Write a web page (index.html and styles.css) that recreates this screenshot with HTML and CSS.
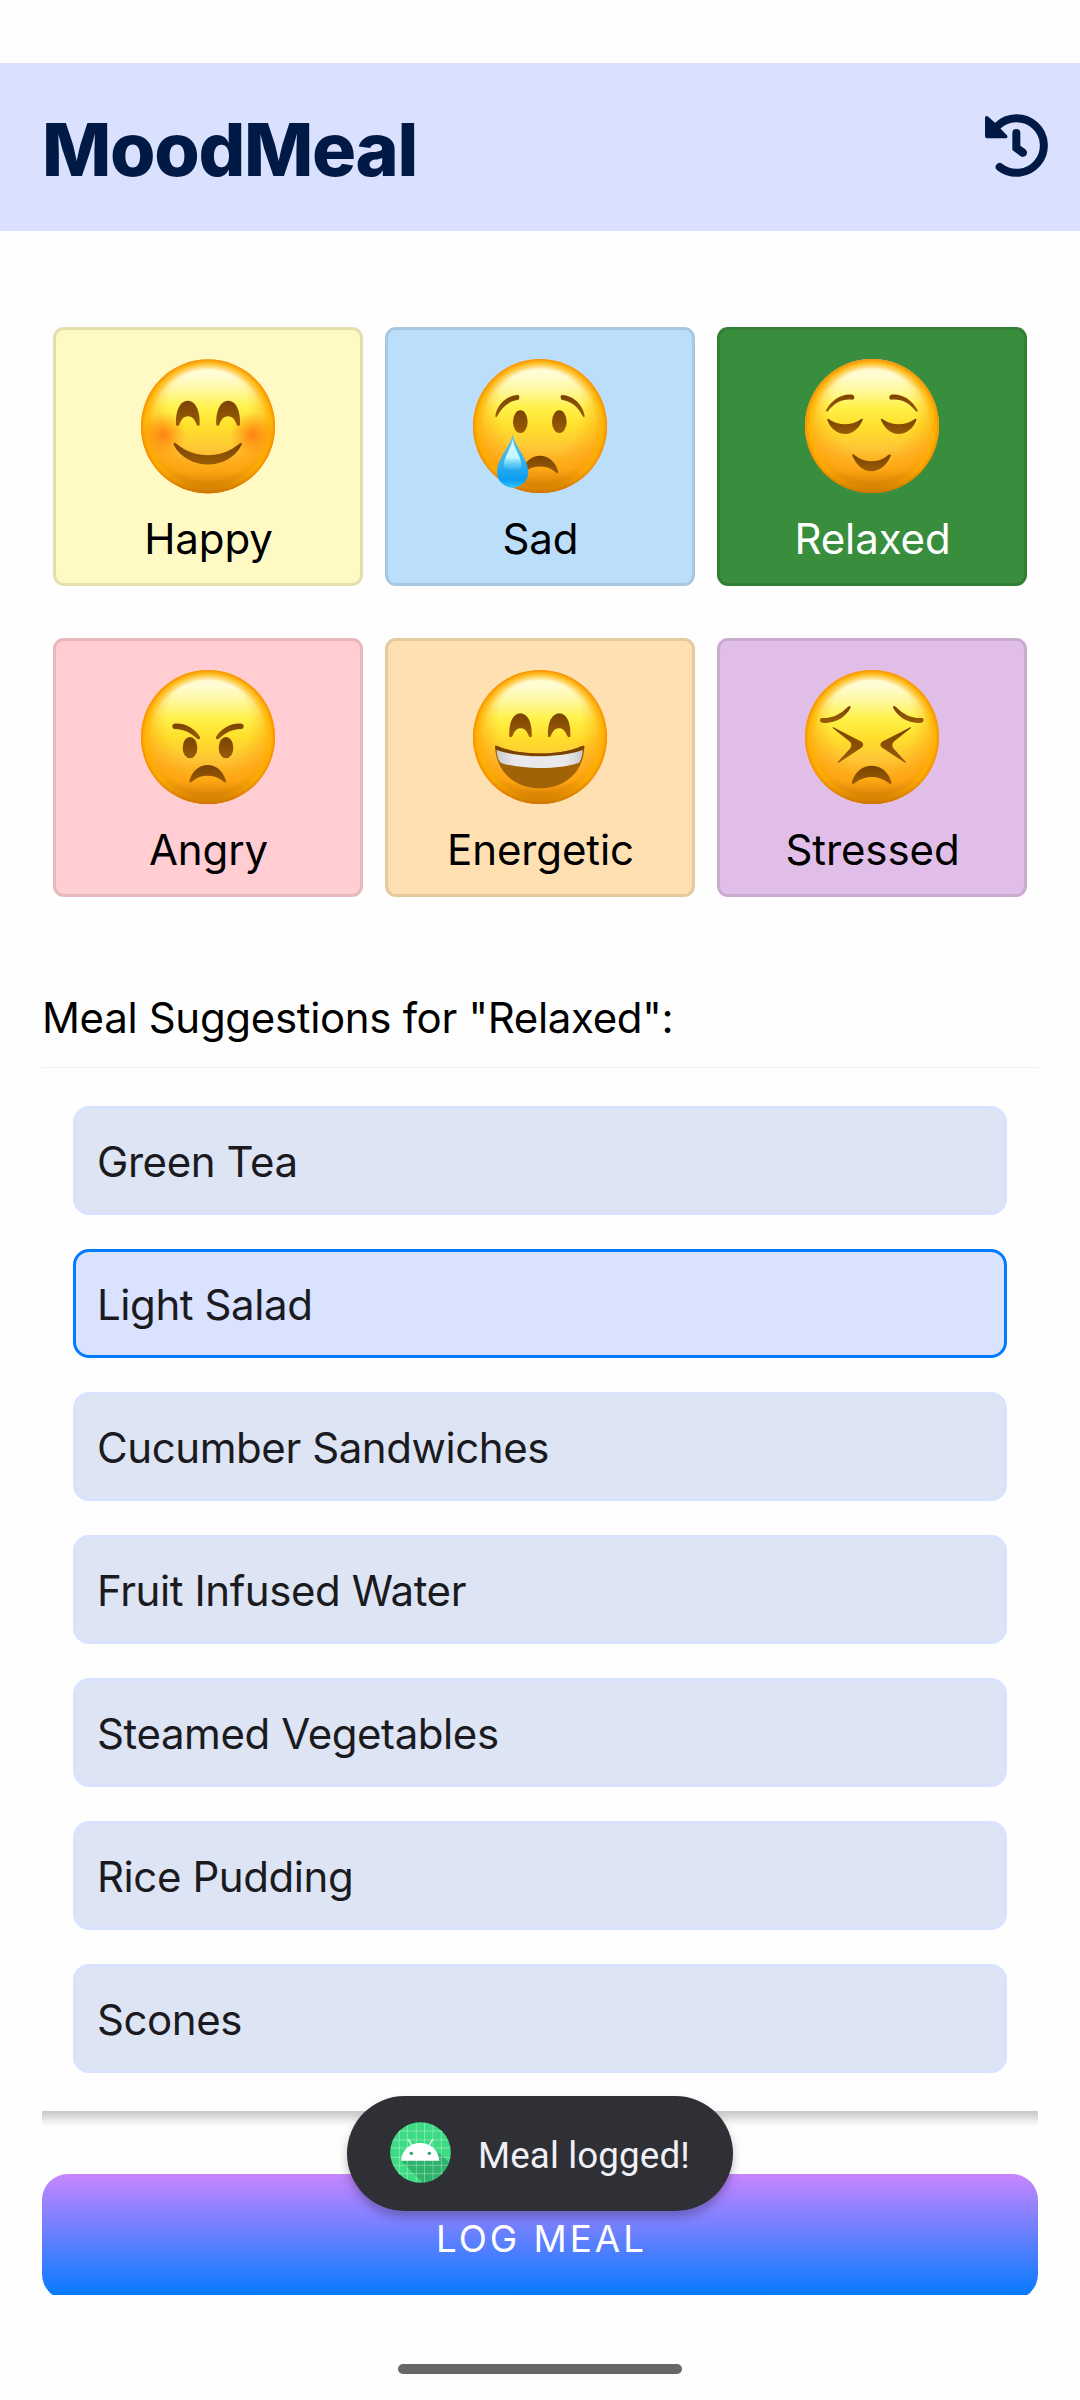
FILE: index.html
```html
<!DOCTYPE html>
<html lang="en">
<head>
<meta charset="utf-8">
<title>MoodMeal</title>
<link rel="stylesheet" href="styles.css">
</head>
<body>
<svg class="defs" width="0" height="0" aria-hidden="true">
  <defs>
    <linearGradient id="skin" x1="0" y1="0" x2="0" y2="1">
      <stop offset="0" stop-color="#fffbd8"/>
      <stop offset=".12" stop-color="#fffcd2"/>
      <stop offset=".24" stop-color="#fff89a"/>
      <stop offset=".36" stop-color="#fff14a"/>
      <stop offset=".5" stop-color="#ffe02c"/>
      <stop offset=".68" stop-color="#fec436"/>
      <stop offset=".8" stop-color="#feb01c"/>
      <stop offset="1" stop-color="#f09a10"/>
    </linearGradient>
    <radialGradient id="side" cx=".5" cy=".38" r=".62">
      <stop offset=".5" stop-color="#ffa412" stop-opacity="0"/>
      <stop offset=".82" stop-color="#ffa00e" stop-opacity=".75"/>
      <stop offset="1" stop-color="#c86a00" stop-opacity=".9"/>
    </radialGradient>
    <radialGradient id="rim" cx=".5" cy=".5" r=".5">
      <stop offset=".84" stop-color="#ffb000" stop-opacity="0"/>
      <stop offset=".94" stop-color="#ffb400" stop-opacity=".8"/>
      <stop offset="1" stop-color="#f78e00"/>
    </radialGradient>
    <linearGradient id="base" x1="0" y1="0" x2="0" y2="1">
      <stop offset=".82" stop-color="#d07800" stop-opacity="0"/>
      <stop offset="1" stop-color="#c06c00" stop-opacity=".75"/>
    </linearGradient>
    <linearGradient id="ink" x1="0" y1="0" x2="0" y2="1">
      <stop offset="0" stop-color="#7a4302"/>
      <stop offset="1" stop-color="#9a5c05"/>
    </linearGradient>
    <radialGradient id="blush">
      <stop offset="0" stop-color="#ff7a10" stop-opacity=".9"/>
      <stop offset="1" stop-color="#ff8a10" stop-opacity="0"/>
    </radialGradient>
    <clipPath id="head"><circle r="201"/></clipPath>
    <linearGradient id="tear" x1="0" y1="0" x2="0" y2="1">
      <stop offset="0" stop-color="#5fc4e8"/>
      <stop offset=".55" stop-color="#2fb0ee"/>
      <stop offset=".85" stop-color="#0c9cf2"/>
      <stop offset="1" stop-color="#35c4f5"/>
    </linearGradient>
    <linearGradient id="gleam" x1="0" y1="0" x2="0" y2="1">
      <stop offset="0" stop-color="#d8fbff"/>
      <stop offset=".6" stop-color="#c4f6ff"/>
      <stop offset="1" stop-color="#5cd0fa" stop-opacity=".2"/>
    </linearGradient>
    <linearGradient id="teeth" x1="0" y1="0" x2="1" y2="0">
      <stop offset="0" stop-color="#c9c9cf"/>
      <stop offset=".2" stop-color="#e9e9ed"/>
      <stop offset=".8" stop-color="#e9e9ed"/>
      <stop offset="1" stop-color="#c9c9cf"/>
    </linearGradient>
    <g id="face">
      <circle r="201" fill="url(#skin)"/>
      <circle r="201" fill="url(#side)"/>
      <circle r="201" fill="url(#rim)"/>
      <circle r="201" fill="url(#base)"/>
    </g>
    <path id="arch" d="M-96-4C-98-48-84-77-61-77S-23-48-25-4C-28 0-33-1-34-5C-40-22-48-30-60-30S-80-22-86-5C-88-1-93 0-96-4Z"/>
    <path id="frown" d="M-55 134C-38 70 38 70 55 134C55 140 51 140 46 135C20 113-20 113-46 135C-51 140-55 140-55 134Z"/>
  </defs>
</svg>

<div class="screen">
  <header class="app-bar">
    <h1 class="app-title">MoodMeal</h1>
    <svg class="history" viewBox="255 162 189 189" aria-label="History">
      <path class="ring" d="M299 321A82 82 0 1 0 292 198"/>
      <path d="M255 174c0-7 6-8 10-4l20 18 17 18 18 19c5 5 2 10-4 10h-54c-4 0-7-3-7-7z"/>
      <path d="M337 219a12 12 0 0 1 24 0v38l15 11a12 12 0 0 1-15 20l-24-18z"/>
    </svg>
  </header>

  <main class="content">
    <section class="moods">
      <button class="mood happy">
        <svg class="emoji" viewBox="-210 -211 420 420">
          <use href="#face"/>
          <g clip-path="url(#head)">
            <circle cx="-133" cy="24" r="68" fill="url(#blush)"/>
            <circle cx="133" cy="24" r="68" fill="url(#blush)"/>
          </g>
          <g fill="url(#ink)">
            <use href="#arch"/>
            <use href="#arch" transform="scale(-1 1)"/>
            <path d="M-103 55C-104 49-98 49-93 54C-40 98 40 98 92 54C97 49 103 49 101 55C62 134-62 134-103 55Z"/>
          </g>
        </svg>
        <span class="mood-name">Happy</span>
      </button>
      <button class="mood sad">
        <svg class="emoji" viewBox="-210 -210 420 420">
          <use href="#face"/>
          <g fill="url(#ink)">
            <path id="worry" d="M-134-30C-130-62-100-92-66-93C-60-92-61-79-67-78C-97-73-114-56-128-30C-130-25-134-26-134-30Z"/>
            <use href="#worry" transform="scale(-1 1)"/>
            <ellipse cx="-59" cy="-13" rx="22" ry="34"/>
            <ellipse cx="58" cy="-13" rx="22" ry="34"/>
            <use href="#frown" y="3"/>
          </g>
          <path d="M-82 26C-76 60-35 98-35 138A47 47 0 0 1-129 138C-129 98-88 60-82 26Z" fill="url(#tear)"/>
          <path d="M-82 38C-78 68-55 92-55 120C-57 136-107 136-109 120C-109 92-86 68-82 38Z" fill="url(#gleam)"/>
        </svg>
        <span class="mood-name">Sad</span>
      </button>
      <button class="mood relaxed">
        <svg class="emoji" viewBox="-210 -210 420 420">
          <use href="#face"/>
          <g fill="url(#ink)">
            <g id="calm">
              <path d="M-138-47C-122-78-90-98-59-94C-51-92-51-79-59-79C-88-82-110-72-131-46C-135-42-140-43-138-47Z"/>
              <path d="M-135-20C-132-24-128-20-124-17C-100-1-62-1-38-17C-34-20-30-24-27-20C-38 8-58 24-81 24S-126 8-135-20Z"/>
            </g>
            <use href="#calm" transform="translate(-1) scale(-1 1)"/>
            <path d="M-60 87C-58 83-53 86-49 90C-22 111 20 111 45 90C49 86 55 83 57 88C46 117 22 136-2 136S-48 117-60 87Z"/>
          </g>
        </svg>
        <span class="mood-name">Relaxed</span>
      </button>
      <button class="mood angry">
        <svg class="emoji" viewBox="-210 -210 420 420">
          <use href="#face"/>
          <g fill="url(#ink)">
            <g id="cross">
              <path d="M-101-40C-68-43-38-24-24 0C-22 6-28 9-33 5C-54-14-72-23-101-24C-109-26-109-38-101-40Z"/>
              <ellipse cx="-54" cy="32" rx="22" ry="32"/>
            </g>
            <use href="#cross" transform="scale(-1 1)"/>
            <use href="#frown" x="-1" y="-2"/>
          </g>
        </svg>
        <span class="mood-name">Angry</span>
      </button>
      <button class="mood energetic">
        <svg class="emoji" viewBox="-210 -210 420 420">
          <use href="#face"/>
          <g fill="url(#ink)">
            <use href="#arch" transform="translate(-1 2) scale(.95)"/>
            <use href="#arch" transform="translate(0 2) scale(-.95 .95)"/>
          </g>
          <path d="M-135 30C-136 25-131 25-126 28C-60 57 60 57 124 28C130 25 134 25 133 30C131 105 75 154 0 154S-131 105-135 30Z" fill="#a26306"/>
          <path d="M-135 30C-136 25-131 25-126 28C-60 57 60 57 124 28C130 25 134 25 133 30C132 37 130 40 128 42C60 62-60 62-130 42Z" fill="#7a4302"/>
          <path d="M-130 39C-60 64 60 64 128 39C127 58 123 68 117 77C60 98-60 98-118 77C-125 68-129 58-130 39Z" fill="url(#teeth)"/>
        </svg>
        <span class="mood-name">Energetic</span>
      </button>
      <button class="mood stressed">
        <svg class="emoji" viewBox="-210 -210 420 420">
          <use href="#face"/>
          <g fill="url(#ink)">
            <g id="wince">
              <path d="M-150-57C-118-56-95-68-72-91C-66-96-62-91-65-86C-82-56-115-38-150-43C-158-46-158-56-150-57Z"/>
              <path d="M-116-29L-34 13C-24 19-24 27-33 33L-100 77C-103 78-104 76-102 74L-65 34C-61 28-61 19-66 14L-117-26C-119-28-118-30-116-29Z"/>
            </g>
            <use href="#wince" transform="translate(-1) scale(-1 1)"/>
            <use href="#frown" transform="translate(-1 -2) scale(1.08 1.03)"/>
          </g>
        </svg>
        <span class="mood-name">Stressed</span>
      </button>
    </section>

    <h2 class="suggest-title">Meal Suggestions for "Relaxed":</h2>
    <ul class="meals">
      <li class="meal">Green Tea</li>
      <li class="meal selected">Light Salad</li>
      <li class="meal">Cucumber Sandwiches</li>
      <li class="meal">Fruit Infused Water</li>
      <li class="meal">Steamed Vegetables</li>
      <li class="meal">Rice Pudding</li>
      <li class="meal">Scones</li>
    </ul>
    <div class="footer">
      <button class="log-button">LOG MEAL</button>
    </div>
  </main>

  <div class="home-bar"></div>

  <div class="toast" role="status">
    <svg class="toast-icon" viewBox="180 157 183 183">
      <clipPath id="disc"><circle cx="271.500" cy="248.500" r="91"/></clipPath>
      <g clip-path="url(#disc)">
        <rect x="180" y="157" width="183" height="183" fill="#3ddc84"/>
        <path d="M213 273L281 341H363V284L328 250Z" fill="#1d7f50" opacity=".45"/>
        <path class="grid" d="M208 157v183M232 157v183M259 157v183M283.500 157v183M309 157v183M334 157v183M180 184h183M180 211h183M180 235h183M180 263h183M180 287h183M180 312h183"/>
        <path d="M213 273C216 240 240 220 270.500 220S325 240 328 273Z" fill="#fff"/>
        <path d="M235 209L245 227M308 209L298 227" stroke="#fff" stroke-width="3.500"/>
        <circle cx="244" cy="251" r="5" fill="#2f9a66"/>
        <circle cx="298" cy="251" r="5" fill="#2f9a66"/>
      </g>
    </svg>
    <span class="toast-text">Meal logged!</span>
  </div>
</div>
</body>
</html>
```

FILE: styles.css
```css
* {
  box-sizing: border-box;
}

body {
  margin: 0;
  background: #fefefe;
  font-family: Inter, "Liberation Sans", sans-serif;
  color: #000;
}

button {
  font: inherit;
  color: inherit;
}

.defs {
  position: absolute;
}

.screen {
  position: relative;
  display: flex;
  flex-direction: column;
  width: 1080px;
  height: 2400px;
  padding-top: 63px;
  overflow: hidden;
}

.app-bar {
  display: flex;
  flex: none;
  justify-content: space-between;
  align-items: flex-start;
  height: 168px;
  padding: 42px 32px 0 42px;
  background: #d9e1ff;
  color: #001945;
}

.app-title {
  margin: 1px 0 0;
  font-size: 73.5px;
  font-weight: 800;
  line-height: 88px;
  letter-spacing: -1.3px;
}

.history {
  width: 63px;
  height: 63px;
  margin-top: 9px;
  fill: #001945;
}

.ring {
  fill: none;
  stroke: #001945;
  stroke-width: 24;
  stroke-linecap: round;
}

.content {
  display: flex;
  flex-direction: column;
  padding: 96px 42px 0;
}

.moods {
  display: grid;
  grid-template-columns: repeat(3, 310px);
  gap: 52px 22px;
  padding: 0 11px;
}

.mood {
  display: flex;
  flex-direction: column;
  align-items: center;
  height: 259px;
  padding: 26px 0 0;
  border: 3px solid rgba(0, 0, 0, 0.1);
  border-radius: 11px;
}

.emoji {
  width: 140px;
  height: 140px;
}

.mood-name {
  margin: 18px 0 0 1px;
  font-size: 42px;
  line-height: 50px;
  letter-spacing: -0.1px;
}

.happy { background: #fff9c4; }
.sad { background: #bbdefb; }
.relaxed { background: #388e3c; color: #fff; }
.angry { background: #ffcdd2; }
.energetic { background: #ffe0b2; }
.stressed { background: #e1bee7; }

.suggest-title {
  margin: 96px 0 0;
  padding-bottom: 24px;
  border-bottom: 1px solid #f2f2f2;
  font-size: 42px;
  font-weight: 400;
  line-height: 50px;
  letter-spacing: -0.33px;
}

.meals {
  display: flex;
  flex-direction: column;
  gap: 34px;
  margin: 0;
  padding: 38px 31px;
  list-style: none;
}

.meal {
  height: 109px;
  padding: 28px 21px 0;
  border: 3px solid #d9e2ff;
  border-radius: 16px;
  background: #dde4f4;
  color: #1b1b1f;
  font-size: 42px;
  line-height: 50px;
  letter-spacing: -0.42px;
}

.meal.selected {
  border-color: #007aff;
  background: #d9e2ff;
}

/* Edge shadow of the scrolling list falls on the footer */
.footer {
  height: 184px;
  padding-top: 63px;
  overflow: hidden;
  background: linear-gradient(#c8c8c8, #d8d8d8 5px, #f3f3f3 11px, #fefefe 16px);
}

.log-button {
  display: block;
  width: 100%;
  height: 126px;
  padding: 3px 0 0 3px;
  border: 0;
  border-radius: 26px;
  background: linear-gradient(#c785ff, #007aff);
  color: #fff;
  font-size: 36.75px;
  letter-spacing: 3px;
}

.home-bar {
  width: 284px;
  height: 10px;
  margin: 69px auto 0;
  border-radius: 5px;
  background: #666;
}

.toast {
  position: absolute;
  top: 2096px;
  left: 347px;
  display: flex;
  align-items: center;
  gap: 27px;
  width: 386px;
  height: 115px;
  padding-left: 43px;
  border-radius: 58px;
  background: #2f3036;
  box-shadow: 0 6px 10px rgba(0, 0, 0, 0.25);
  color: #f1f0f7;
  font-family: Roboto, sans-serif;
  font-size: 36.75px;
  letter-spacing: 0.12px;
  white-space: nowrap;
}

.toast-icon {
  width: 61px;
  height: 61px;
  margin-top: -2px;
}

.toast-text {
  padding-top: 3px;
}

.grid {
  fill: none;
  stroke: #fff;
  stroke-width: 2.5;
  opacity: 0.4;
}
```
